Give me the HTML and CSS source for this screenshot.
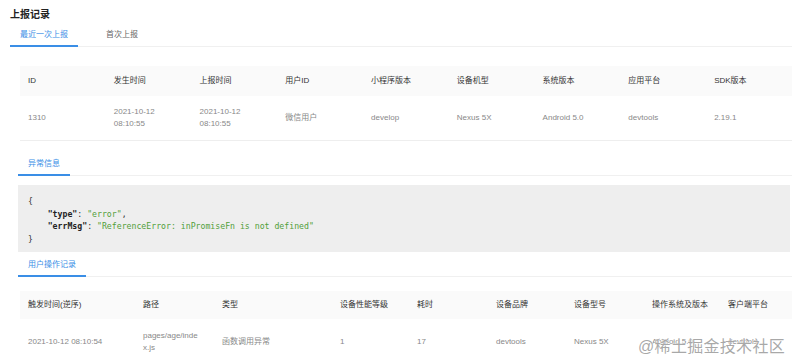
FILE: index.html
```html
<!DOCTYPE html>
<html>
<head>
    <meta charset="UTF-8">
    <title>上报记录</title>
    <link rel="stylesheet" href="styles.css">
</head>
<body>
    <div class="page">
        <h2 class="title">上报记录</h2>

        <div class="tabs">
            <div class="tab active">最近一次上报</div>
            <div class="tab">首次上报</div>
        </div>

        <div class="panel">
            <table class="grid report">
                <thead>
                    <tr>
                        <th>ID</th>
                        <th>发生时间</th>
                        <th>上报时间</th>
                        <th>用户ID</th>
                        <th>小程序版本</th>
                        <th>设备机型</th>
                        <th>系统版本</th>
                        <th>应用平台</th>
                        <th>SDK版本</th>
                    </tr>
                </thead>
                <tbody>
                    <tr>
                        <td>1310</td>
                        <td>2021-10-12<br>08:10:55</td>
                        <td>2021-10-12<br>08:10:55</td>
                        <td>微信用户</td>
                        <td>develop</td>
                        <td>Nexus 5X</td>
                        <td>Android 5.0</td>
                        <td>devtools</td>
                        <td>2.19.1</td>
                    </tr>
                </tbody>
            </table>

            <div class="tabs sub">
                <div class="tab active">异常信息</div>
            </div>

            <div class="code">
                <div class="line">{</div>
                <div class="line indent"><b>"type"</b>: <span class="str">"error"</span>,</div>
                <div class="line indent"><b>"errMsg"</b>: <span class="str">"ReferenceError: inPromiseFn is not defined"</span></div>
                <div class="line">}</div>
            </div>

            <div class="tabs sub near">
                <div class="tab active">用户操作记录</div>
            </div>

            <table class="grid actions">
                <thead>
                    <tr>
                        <th>触发时间(逆序)</th>
                        <th>路径</th>
                        <th>类型</th>
                        <th>设备性能等级</th>
                        <th>耗时</th>
                        <th>设备品牌</th>
                        <th>设备型号</th>
                        <th>操作系统及版本</th>
                        <th>客户端平台</th>
                    </tr>
                </thead>
                <tbody>
                    <tr>
                        <td>2021-10-12 08:10:54</td>
                        <td>pages/age/inde<br>x.js</td>
                        <td>函数调用异常</td>
                        <td>1</td>
                        <td>17</td>
                        <td>devtools</td>
                        <td>Nexus 5X</td>
                        <td>Android 5.0</td>
                        <td>devtools</td>
                    </tr>
                </tbody>
            </table>
        </div>

        <div class="watermark">@稀土掘金技术社区</div>
    </div>
</body>
</html>
```

FILE: styles.css
```css
body {
    margin: 0;
    background-color: #ffffff;
    font-family: "Liberation Sans", "Noto Sans CJK SC", sans-serif;
    color: #333;
    overflow: hidden;
}
.page {
    position: relative;
    padding: 8px 8px 0 10px;
}
.title {
    margin: 0;
    font-size: 10px;
    line-height: 14px;
    font-weight: bold;
    color: #222;
}
.tabs {
    display: flex;
    gap: 18px;
    margin-top: 4px;
    border-bottom: 1px solid #f0f0f0;
}
.tab {
    padding: 3px 10px 4px;
    font-size: 8px;
    line-height: 12px;
    color: #666;
    border-bottom: 2px solid transparent;
    margin-bottom: -1px;
}
.tab.active {
    color: #3a8ee6;
    border-bottom-color: #3a8ee6;
}
.panel {
    padding-left: 8px;
}
.tabs.sub {
    margin-top: 14px;
}
.tabs.sub.near {
    margin-top: 4px;
}
.grid {
    width: calc(100% - 2px);
    margin-left: 2px;
    border-collapse: collapse;
    table-layout: fixed;
    font-size: 8px;
}
.grid th {
    text-align: left;
    font-weight: normal;
    color: #333;
    background-color: #fafafa;
    padding: 9px 8px;
    line-height: 12px;
}
.grid td {
    color: #888;
    padding: 10px 8px;
    line-height: 12px;
    border-bottom: 1px solid #eeeeee;
    word-break: break-all;
}
.report {
    margin-top: 19px;
}
.actions {
    margin-top: 14px;
}
.actions th {
    padding: 8px 8px;
}
.actions td {
    padding: 11px 8px;
    line-height: 11.5px;
}
.actions th:nth-child(1) { width: 99px; }
.actions th:nth-child(2) { width: 63px; }
.actions th:nth-child(3) { width: 102px; }
.actions th:nth-child(4) { width: 61px; }
.actions th:nth-child(5) { width: 63px; }
.actions th:nth-child(6) { width: 62px; }
.actions th:nth-child(7) { width: 62px; }
.actions th:nth-child(8) { width: 60px; }
.code {
    margin: 9px 2px 0 0;
    padding: 10px 10px 7px;
    background-color: #eeeeee;
    font-family: "DejaVu Sans Mono", "Liberation Mono", monospace;
    font-size: 8.2px;
    line-height: 12.5px;
    color: #333;
}
.code .line {
    white-space: pre;
}
.code .indent {
    padding-left: 19.7px;
}
.code b {
    color: #222;
}
.code .str {
    color: #52a03a;
}
.watermark {
    position: absolute;
    right: 15px;
    top: 333px;
    font-size: 16px;
    letter-spacing: 0.3px;
    color: rgba(140, 140, 140, 0.75);
    text-shadow: 0 0 2px #fff, 0 0 1px #fff;
}
```
